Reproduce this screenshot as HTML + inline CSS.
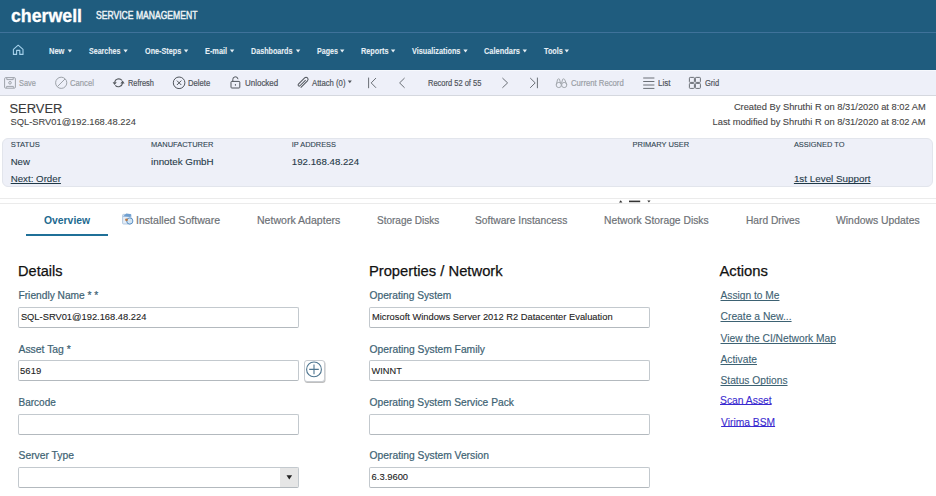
<!DOCTYPE html>
<html><head><meta charset="utf-8"><title>Cherwell Service Management</title><style>
html,body{margin:0;padding:0;}
body{width:936px;height:496px;overflow:hidden;position:relative;background:#fff;font-family:"Liberation Sans",sans-serif;}
.t{position:absolute;white-space:nowrap;transform-origin:0 0;display:block;}
.abs{position:absolute;}
#hdr{left:0;top:0;width:936px;height:70px;background:#1f5c7e;}
#hdrline{left:0;top:32px;width:936px;height:1px;background:#3f729a;}
#tb{left:0;top:70px;width:936px;height:24px;background:#eef0f9;border-top:1px solid #f6f8fd;border-bottom:1px solid #d5d8df;}
#box{left:2px;top:137.5px;width:929px;height:47.5px;background:#eef0f8;border:1px solid #e2e5ec;border-radius:6px;}
#band{left:0;top:198px;width:936px;height:4px;border-top:1px solid #ebebeb;border-bottom:1px solid #ebebeb;background:#fff;}
#tabul{left:26px;top:234px;width:82px;height:2px;background:#1f7098;}
.inp{position:absolute;box-sizing:border-box;background:#fff;border:1px solid #c3c9ce;border-bottom-color:#b3b9be;border-radius:2px;}
.sel .selbtn{position:absolute;right:0;top:0;width:18px;height:19px;background:#e6e6e6;}
#plusbtn{left:303.5px;top:360.2px;width:21px;height:21.4px;box-sizing:border-box;border:1px solid #c9cdd2;border-radius:3px;background:#fff;box-shadow:0.5px 1px 0.5px rgba(0,0,0,0.25);}

</style></head><body>
<div class="abs" id="hdr"></div>
<div class="abs" id="hdrline"></div>
<div class="abs" id="tb"></div>
<div class="abs" id="box"></div>
<div class="abs" id="band"></div>
<div class="abs" id="tabul"></div>
<div class="inp" style="left:18px;top:307px;width:281px;height:21px;"></div>
<div class="inp" style="left:18px;top:360px;width:281px;height:21px;"></div>
<div class="inp" style="left:18px;top:414px;width:281px;height:21px;"></div>
<div class="inp sel" style="left:18px;top:467px;width:281px;height:21px;"><div class="selbtn"></div></div>
<div class="inp" style="left:369px;top:307px;width:281px;height:21px;"></div>
<div class="inp" style="left:369px;top:360px;width:281px;height:21px;"></div>
<div class="inp" style="left:369px;top:414px;width:281px;height:21px;"></div>
<div class="inp" style="left:369px;top:467px;width:281px;height:21px;"></div>
<div class="abs" id="plusbtn"></div>
<svg class="abs" style="left:0;top:0" width="936" height="496" viewBox="0 0 936 496">
 <!-- home -->
 <path d="M13.4,54.4 V49.4 L18.2,45.2 L23,49.4 V54.4 H19.8 V50.4 H16.6 V54.4 Z" fill="none" stroke="#a6d2ec" stroke-width="1.1" stroke-linejoin="round"/>
 <!-- nav arrows -->
 <g fill="#e6eff5">
  <path d="M67.7,49.6 h4.4 l-2.2,3z"/>
  <path d="M123.4,49.6 h4.4 l-2.2,3z"/>
  <path d="M183.9,49.6 h4.4 l-2.2,3z"/>
  <path d="M229.9,49.6 h4.4 l-2.2,3z"/>
  <path d="M295.9,49.6 h4.4 l-2.2,3z"/>
  <path d="M340.0,49.6 h4.4 l-2.2,3z"/>
  <path d="M390.9,49.6 h4.4 l-2.2,3z"/>
  <path d="M463.3,49.6 h4.4 l-2.2,3z"/>
  <path d="M522.6,49.6 h4.4 l-2.2,3z"/>
  <path d="M564.6,49.6 h4.4 l-2.2,3z"/>
 </g>
 <!-- save icon -->
 <g fill="none" stroke="#9ea3aa" stroke-width="1">
  <rect x="4.6" y="77.6" width="10.8" height="10.6" rx="1.2"/>
  <path d="M6.8,78 v1.6 h6.4 v-1.6"/>
  <circle cx="10" cy="82.8" r="1.3"/>
  <path d="M6.6,87.8 v-1.4 h6.8 v1.4"/>
 </g>
 <!-- cancel icon -->
 <g fill="none" stroke="#9ea3aa" stroke-width="1">
  <circle cx="61.2" cy="82.8" r="5.6"/>
  <path d="M57.4,86.6 L65,79"/>
 </g>
 <!-- refresh -->
 <g fill="none" stroke="#55595f" stroke-width="1.1">
  <path d="M121.9,80.3 A4.2,4.2 0 0 0 114.6,82.4"/>
  <path d="M115.3,85.3 A4.2,4.2 0 0 0 122.6,83.2"/>
 </g>
 <g fill="#55595f">
  <path d="M112.6,82.2 L116.8,82.2 L114.6,85Z"/>
  <path d="M120.4,83.4 L124.6,83.4 L122.6,80.6Z"/>
 </g>
 <!-- delete -->
 <g fill="none" stroke="#50555c" stroke-width="1">
  <circle cx="179.1" cy="82.8" r="5.8"/>
  <path d="M176.9,80.6 L181.3,85 M181.3,80.6 L176.9,85"/>
 </g>
 <!-- unlocked -->
 <g fill="none" stroke="#50555c" stroke-width="1">
  <rect x="231" y="81.4" width="8.8" height="6.6" rx="0.8"/>
  <path d="M232.8,81.4 V79.6 A2.6,2.6 0 0 1 238,79.2"/>
 </g>
 <rect x="234.9" y="84.2" width="1.1" height="1.4" fill="#50555c"/>
 <!-- paperclip -->
 <g transform="translate(304,82.7) rotate(-45)">
  <path d="M-5.8,1.1 H3.8 A2,2 0 0 0 3.8,-2.9 H-5 A1.1,1.1 0 0 0 -5,-0.7 H3" fill="none" stroke="#50555c" stroke-width="1"/>
 </g>
 <path d="M347.8,80.4 h4 l-2,2.8z" fill="#50555c"/>
 <!-- first / prev / next / last -->
 <g fill="none" stroke="#6a6f76" stroke-width="1">
  <path d="M368.6,77.6 V88.2"/>
  <path d="M376,78 L371.2,82.9 L376,87.8"/>
  <path d="M404.6,78 L399.6,82.9 L404.6,87.8"/>
  <path d="M502.4,78 L507.6,82.9 L502.4,87.8"/>
  <path d="M530.2,78 L535.2,82.9 L530.2,87.8"/>
  <path d="M537.4,77.6 V88.2"/>
 </g>
 <!-- binoculars -->
 <g fill="none" stroke="#a3a8ae" stroke-width="1">
  <circle cx="558.8" cy="85" r="2.6"/>
  <circle cx="564.2" cy="85" r="2.6"/>
  <path d="M556.3,84.6 L557.6,79.4 Q558.4,78.4 559.5,79.2 L560.6,83.6 M561.4,83.6 L562.7,79.2 Q563.8,78.4 564.6,79.4 L566.8,84.6"/>
 </g>
 <!-- list -->
 <g fill="none" stroke="#6a6f76" stroke-width="1">
  <path d="M643.2,78 H654.4 M643.2,81.5 H654.4 M643.2,85 H654.4 M643.2,88.4 H654.4"/>
 </g>
 <!-- grid -->
 <g fill="none" stroke="#6a6f76" stroke-width="1">
  <rect x="689.4" y="77.4" width="5" height="5" rx="0.8"/>
  <rect x="695.4" y="77.4" width="5" height="5" rx="0.8"/>
  <rect x="689.4" y="83.4" width="5" height="5" rx="0.8"/>
  <rect x="695.4" y="83.4" width="5" height="5" rx="0.8"/>
 </g>
 <!-- band glyphs -->
 <path d="M619,202.4 L620.7,200.2 L622.4,202.4Z" fill="#333"/>
 <rect x="629" y="200.6" width="11.2" height="1.6" fill="#333"/>
 <path d="M647.3,200.4 L650.5,200.4 L648.9,202.6Z" fill="#333"/>
 <!-- installed software icon -->
 <rect x="122.6" y="214.4" width="8.4" height="9.6" rx="0.8" fill="#e4edf7" stroke="#a3bed9" stroke-width="0.8"/>
 <path d="M122.8,216.6 L126.4,213.4 L131.2,214.2 L130.6,217 Z" fill="#6f9fd0"/>
 <circle cx="129.8" cy="221" r="3.1" fill="#d2e5f4" stroke="#4f86bd" stroke-width="0.9"/>
 <circle cx="126.5" cy="219.8" r="1.4" fill="#b97a48"/>
 <!-- plus -->
 <circle cx="314" cy="369.4" r="7.4" fill="none" stroke="#4f7690" stroke-width="1.1"/>
 <path d="M309.2,369.4 H318.8 M314,364.6 V374.2" stroke="#4f7690" stroke-width="1.1"/>
 <!-- select arrow -->
 <path d="M286.5,475.2 L292.1,475.2 L289.3,479.6Z" fill="#222"/>
</svg>

<span class="t" id="logo" style="left:11.00px;top:5.86px;font-size:17.833px;line-height:20.490px;color:#ffffff;font-weight:bold;transform:scaleX(0.9950);-webkit-text-stroke:0.3px currentColor;">cherwell</span>
<span class="t" id="svcm" style="left:96.00px;top:9.07px;font-size:10.974px;line-height:12.609px;color:#eef3f7;font-weight:normal;transform:scaleX(0.7823);-webkit-text-stroke:0.45px currentColor;">SERVICE MANAGEMENT</span>
<span class="t" id="n_new" style="left:49.40px;top:45.54px;font-size:8.794px;line-height:10.104px;color:#e6eff5;font-weight:bold;transform:scaleX(0.8526);-webkit-text-stroke:0.1px currentColor;">New</span>
<span class="t" id="n_sea" style="left:88.90px;top:45.54px;font-size:8.794px;line-height:10.104px;color:#e6eff5;font-weight:bold;transform:scaleX(0.8038);-webkit-text-stroke:0.1px currentColor;">Searches</span>
<span class="t" id="n_one" style="left:144.60px;top:45.54px;font-size:8.794px;line-height:10.104px;color:#e6eff5;font-weight:bold;transform:scaleX(0.8242);-webkit-text-stroke:0.1px currentColor;">One-Steps</span>
<span class="t" id="n_em" style="left:204.90px;top:45.54px;font-size:8.794px;line-height:10.104px;color:#e6eff5;font-weight:bold;transform:scaleX(0.8384);-webkit-text-stroke:0.1px currentColor;">E-mail</span>
<span class="t" id="n_das" style="left:251.30px;top:45.54px;font-size:8.794px;line-height:10.104px;color:#e6eff5;font-weight:bold;transform:scaleX(0.8177);-webkit-text-stroke:0.1px currentColor;">Dashboards</span>
<span class="t" id="n_pag" style="left:316.50px;top:45.54px;font-size:8.794px;line-height:10.104px;color:#e6eff5;font-weight:bold;transform:scaleX(0.8077);-webkit-text-stroke:0.1px currentColor;">Pages</span>
<span class="t" id="n_rep" style="left:361.30px;top:45.54px;font-size:8.794px;line-height:10.104px;color:#e6eff5;font-weight:bold;transform:scaleX(0.8286);-webkit-text-stroke:0.1px currentColor;">Reports</span>
<span class="t" id="n_vis" style="left:412.20px;top:45.54px;font-size:8.794px;line-height:10.104px;color:#e6eff5;font-weight:bold;transform:scaleX(0.8287);-webkit-text-stroke:0.1px currentColor;">Visualizations</span>
<span class="t" id="n_cal" style="left:484.00px;top:45.54px;font-size:8.794px;line-height:10.104px;color:#e6eff5;font-weight:bold;transform:scaleX(0.8453);-webkit-text-stroke:0.1px currentColor;">Calendars</span>
<span class="t" id="n_too" style="left:543.80px;top:45.54px;font-size:8.794px;line-height:10.104px;color:#e6eff5;font-weight:bold;transform:scaleX(0.8258);-webkit-text-stroke:0.1px currentColor;">Tools</span>
<span class="t" id="t_save" style="left:19.20px;top:77.84px;font-size:8.794px;line-height:10.104px;color:#9a9fa6;font-weight:normal;transform:scaleX(0.8393);-webkit-text-stroke:0.2px currentColor;">Save</span>
<span class="t" id="t_can" style="left:69.80px;top:77.84px;font-size:8.794px;line-height:10.104px;color:#9a9fa6;font-weight:normal;transform:scaleX(0.8741);-webkit-text-stroke:0.2px currentColor;">Cancel</span>
<span class="t" id="t_ref" style="left:127.90px;top:77.84px;font-size:8.794px;line-height:10.104px;color:#50555c;font-weight:normal;transform:scaleX(0.8423);-webkit-text-stroke:0.2px currentColor;">Refresh</span>
<span class="t" id="t_del" style="left:188.40px;top:77.84px;font-size:8.794px;line-height:10.104px;color:#50555c;font-weight:normal;transform:scaleX(0.8743);-webkit-text-stroke:0.2px currentColor;">Delete</span>
<span class="t" id="t_unl" style="left:244.80px;top:77.84px;font-size:8.794px;line-height:10.104px;color:#50555c;font-weight:normal;transform:scaleX(0.9069);-webkit-text-stroke:0.2px currentColor;">Unlocked</span>
<span class="t" id="t_att" style="left:312.00px;top:77.84px;font-size:8.794px;line-height:10.104px;color:#50555c;font-weight:normal;transform:scaleX(0.8798);-webkit-text-stroke:0.2px currentColor;">Attach (0)</span>
<span class="t" id="t_rec" style="left:427.60px;top:77.84px;font-size:8.794px;line-height:10.104px;color:#50555c;font-weight:normal;transform:scaleX(0.8544);-webkit-text-stroke:0.2px currentColor;">Record 52 of 55</span>
<span class="t" id="t_cur" style="left:571.30px;top:77.84px;font-size:8.794px;line-height:10.104px;color:#9a9fa6;font-weight:normal;transform:scaleX(0.8779);-webkit-text-stroke:0.2px currentColor;">Current Record</span>
<span class="t" id="t_list" style="left:658.00px;top:77.84px;font-size:8.794px;line-height:10.104px;color:#50555c;font-weight:normal;transform:scaleX(0.9070);-webkit-text-stroke:0.2px currentColor;">List</span>
<span class="t" id="t_grid" style="left:704.80px;top:77.84px;font-size:8.794px;line-height:10.104px;color:#50555c;font-weight:normal;transform:scaleX(0.8557);-webkit-text-stroke:0.2px currentColor;">Grid</span>
<span class="t" id="srv" style="left:9.40px;top:101.77px;font-size:12.961px;line-height:14.892px;color:#3a3a3a;font-weight:normal;-webkit-text-stroke:0.1px currentColor;">SERVER</span>
<span class="t" id="srvsub" style="left:10.60px;top:117.45px;font-size:9.329px;line-height:10.719px;color:#454545;font-weight:normal;-webkit-text-stroke:0.1px currentColor;">SQL-SRV01@192.168.48.224</span>
<span class="t" id="crt" style="left:733.90px;top:101.97px;font-size:9.307px;line-height:10.693px;color:#454545;font-weight:normal;-webkit-text-stroke:0.1px currentColor;">Created By Shruthi R on 8/31/2020 at 8:02 AM</span>
<span class="t" id="lmod" style="left:712.60px;top:117.27px;font-size:9.312px;line-height:10.699px;color:#454545;font-weight:normal;-webkit-text-stroke:0.1px currentColor;">Last modified by Shruthi R on 8/31/2020 at 8:02 AM</span>
<span class="t" id="l_st" style="left:10.80px;top:140.93px;font-size:7.644px;line-height:8.783px;color:#2f4450;font-weight:normal;-webkit-text-stroke:0.1px currentColor;">STATUS</span>
<span class="t" id="l_man" style="left:151.10px;top:141.09px;font-size:7.471px;line-height:8.584px;color:#2f4450;font-weight:normal;-webkit-text-stroke:0.1px currentColor;">MANUFACTURER</span>
<span class="t" id="l_ip" style="left:291.80px;top:141.16px;font-size:7.392px;line-height:8.494px;color:#2f4450;font-weight:normal;-webkit-text-stroke:0.1px currentColor;">IP ADDRESS</span>
<span class="t" id="l_pu" style="left:632.50px;top:141.07px;font-size:7.491px;line-height:8.607px;color:#2f4450;font-weight:normal;-webkit-text-stroke:0.1px currentColor;">PRIMARY USER</span>
<span class="t" id="l_as" style="left:793.90px;top:141.11px;font-size:7.449px;line-height:8.559px;color:#2f4450;font-weight:normal;-webkit-text-stroke:0.1px currentColor;">ASSIGNED TO</span>
<span class="t" id="v_new" style="left:10.70px;top:155.66px;font-size:9.600px;line-height:11.030px;color:#1f3947;font-weight:normal;-webkit-text-stroke:0.1px currentColor;">New</span>
<span class="t" id="v_inn" style="left:151.00px;top:156.48px;font-size:9.800px;line-height:11.260px;color:#1f3947;font-weight:normal;-webkit-text-stroke:0.1px currentColor;">innotek GmbH</span>
<span class="t" id="v_ip" style="left:291.80px;top:155.57px;font-size:9.703px;line-height:11.148px;color:#1f3947;font-weight:normal;-webkit-text-stroke:0.1px currentColor;">192.168.48.224</span>
<span class="t" id="v_next" style="left:10.70px;top:172.78px;font-size:9.739px;line-height:11.191px;color:#1f3947;font-weight:normal;text-decoration:underline;text-decoration-skip-ink:none;text-decoration-thickness:1px;text-underline-offset:1px;-webkit-text-stroke:0.1px currentColor;">Next: Order</span>
<span class="t" id="v_1st" style="left:793.90px;top:172.68px;font-size:9.850px;line-height:11.317px;color:#1f3947;font-weight:normal;text-decoration:underline;text-decoration-skip-ink:none;text-decoration-thickness:1px;text-underline-offset:1px;-webkit-text-stroke:0.1px currentColor;">1st Level Support</span>
<span class="t" id="tab_ov" style="left:43.90px;top:214.10px;font-size:11.265px;line-height:12.943px;color:#1d6a90;font-weight:bold;transform:scaleX(0.9211);">Overview</span>
<span class="t" id="tab_is" style="left:135.60px;top:214.07px;font-size:11.410px;line-height:13.110px;color:#6d7176;font-weight:normal;transform:scaleX(0.9275);-webkit-text-stroke:0.2px currentColor;">Installed Software</span>
<span class="t" id="tab_na" style="left:256.70px;top:214.07px;font-size:11.410px;line-height:13.110px;color:#6d7176;font-weight:normal;transform:scaleX(0.9252);-webkit-text-stroke:0.2px currentColor;">Network Adapters</span>
<span class="t" id="tab_sd" style="left:376.50px;top:214.07px;font-size:11.410px;line-height:13.110px;color:#6d7176;font-weight:normal;transform:scaleX(0.8775);-webkit-text-stroke:0.2px currentColor;">Storage Disks</span>
<span class="t" id="tab_si" style="left:475.40px;top:214.07px;font-size:11.410px;line-height:13.110px;color:#6d7176;font-weight:normal;transform:scaleX(0.8986);-webkit-text-stroke:0.2px currentColor;">Software Instancess</span>
<span class="t" id="tab_nsd" style="left:604.20px;top:214.07px;font-size:11.410px;line-height:13.110px;color:#6d7176;font-weight:normal;transform:scaleX(0.9016);-webkit-text-stroke:0.2px currentColor;">Network Storage Disks</span>
<span class="t" id="tab_hd" style="left:745.80px;top:214.07px;font-size:11.410px;line-height:13.110px;color:#6d7176;font-weight:normal;transform:scaleX(0.8934);-webkit-text-stroke:0.2px currentColor;">Hard Drives</span>
<span class="t" id="tab_wu" style="left:835.90px;top:214.07px;font-size:11.410px;line-height:13.110px;color:#6d7176;font-weight:normal;transform:scaleX(0.9104);-webkit-text-stroke:0.2px currentColor;">Windows Updates</span>
<span class="t" id="h_det" style="left:18.10px;top:262.74px;font-size:14.539px;line-height:16.705px;color:#111111;font-weight:normal;-webkit-text-stroke:0.25px currentColor;">Details</span>
<span class="t" id="h_pro" style="left:368.90px;top:262.52px;font-size:14.785px;line-height:16.988px;color:#111111;font-weight:normal;-webkit-text-stroke:0.25px currentColor;">Properties / Network</span>
<span class="t" id="h_act" style="left:719.40px;top:263.47px;font-size:14.831px;line-height:17.041px;color:#111111;font-weight:normal;-webkit-text-stroke:0.25px currentColor;">Actions</span>
<span class="t" id="f_fn" style="left:18.50px;top:289.87px;font-size:10.192px;line-height:11.710px;color:#3d6273;font-weight:normal;-webkit-text-stroke:0.2px currentColor;">Friendly Name * *</span>
<span class="t" id="f_at" style="left:18.50px;top:344.00px;font-size:10.385px;line-height:11.932px;color:#3d6273;font-weight:normal;-webkit-text-stroke:0.2px currentColor;">Asset Tag *</span>
<span class="t" id="f_bc" style="left:18.50px;top:396.63px;font-size:10.020px;line-height:11.513px;color:#3d6273;font-weight:normal;-webkit-text-stroke:0.2px currentColor;">Barcode</span>
<span class="t" id="f_st" style="left:18.50px;top:449.64px;font-size:10.337px;line-height:11.877px;color:#3d6273;font-weight:normal;-webkit-text-stroke:0.2px currentColor;">Server Type</span>
<span class="t" id="f_os" style="left:369.60px;top:289.87px;font-size:10.191px;line-height:11.710px;color:#3d6273;font-weight:normal;-webkit-text-stroke:0.2px currentColor;">Operating System</span>
<span class="t" id="f_osf" style="left:369.60px;top:344.10px;font-size:10.271px;line-height:11.801px;color:#3d6273;font-weight:normal;-webkit-text-stroke:0.2px currentColor;">Operating System Family</span>
<span class="t" id="f_ossp" style="left:369.60px;top:397.43px;font-size:10.238px;line-height:11.764px;color:#3d6273;font-weight:normal;-webkit-text-stroke:0.2px currentColor;">Operating System Service Pack</span>
<span class="t" id="f_osv" style="left:369.60px;top:449.69px;font-size:10.287px;line-height:11.820px;color:#3d6273;font-weight:normal;-webkit-text-stroke:0.2px currentColor;">Operating System Version</span>
<span class="t" id="i_fn" style="left:20.90px;top:311.75px;font-size:9.331px;line-height:10.721px;color:#222222;font-weight:normal;-webkit-text-stroke:0.1px currentColor;">SQL-SRV01@192.168.48.224</span>
<span class="t" id="i_at" style="left:20.10px;top:365.90px;font-size:9.495px;line-height:10.910px;color:#222222;font-weight:normal;-webkit-text-stroke:0.1px currentColor;">5619</span>
<span class="t" id="i_os" style="left:372.00px;top:311.75px;font-size:9.333px;line-height:10.724px;color:#222222;font-weight:normal;-webkit-text-stroke:0.1px currentColor;">Microsoft Windows Server 2012 R2 Datacenter Evaluation</span>
<span class="t" id="i_osf" style="left:371.60px;top:366.44px;font-size:9.231px;line-height:10.607px;color:#222222;font-weight:normal;-webkit-text-stroke:0.1px currentColor;">WINNT</span>
<span class="t" id="i_osv" style="left:371.60px;top:471.70px;font-size:9.392px;line-height:10.791px;color:#222222;font-weight:normal;-webkit-text-stroke:0.1px currentColor;">6.3.9600</span>
<span class="t" id="a_1" style="left:720.50px;top:289.86px;font-size:10.210px;line-height:11.731px;color:#3d6273;font-weight:normal;text-decoration:underline;text-decoration-skip-ink:none;text-decoration-thickness:1px;text-underline-offset:1px;-webkit-text-stroke:0.1px currentColor;">Assign to Me</span>
<span class="t" id="a_2" style="left:720.50px;top:310.75px;font-size:10.324px;line-height:11.862px;color:#3d6273;font-weight:normal;text-decoration:underline;text-decoration-skip-ink:none;text-decoration-thickness:1px;text-underline-offset:1px;-webkit-text-stroke:0.1px currentColor;">Create a New...</span>
<span class="t" id="a_3" style="left:720.50px;top:333.11px;font-size:10.267px;line-height:11.797px;color:#3d6273;font-weight:normal;text-decoration:underline;text-decoration-skip-ink:none;text-decoration-thickness:1px;text-underline-offset:1px;-webkit-text-stroke:0.1px currentColor;">View the CI/Network Map</span>
<span class="t" id="a_4" style="left:720.50px;top:354.31px;font-size:10.262px;line-height:11.791px;color:#3d6273;font-weight:normal;text-decoration:underline;text-decoration-skip-ink:none;text-decoration-thickness:1px;text-underline-offset:1px;-webkit-text-stroke:0.1px currentColor;">Activate</span>
<span class="t" id="a_5" style="left:720.50px;top:374.54px;font-size:10.232px;line-height:11.756px;color:#3d6273;font-weight:normal;text-decoration:underline;text-decoration-skip-ink:none;text-decoration-thickness:1px;text-underline-offset:1px;-webkit-text-stroke:0.1px currentColor;">Status Options</span>
<span class="t" id="a_6" style="left:720.00px;top:395.14px;font-size:10.341px;line-height:11.881px;color:#3a2ad0;font-weight:normal;text-decoration:underline;text-decoration-skip-ink:none;text-decoration-thickness:1px;text-underline-offset:0px;-webkit-text-stroke:0.1px currentColor;">Scan Asset</span>
<span class="t" id="a_7" style="left:721.10px;top:416.50px;font-size:10.278px;line-height:11.810px;color:#3a2ad0;font-weight:normal;text-decoration:underline;text-decoration-skip-ink:none;text-decoration-thickness:1px;text-underline-offset:0px;-webkit-text-stroke:0.1px currentColor;">Virima BSM</span>
</body></html>
